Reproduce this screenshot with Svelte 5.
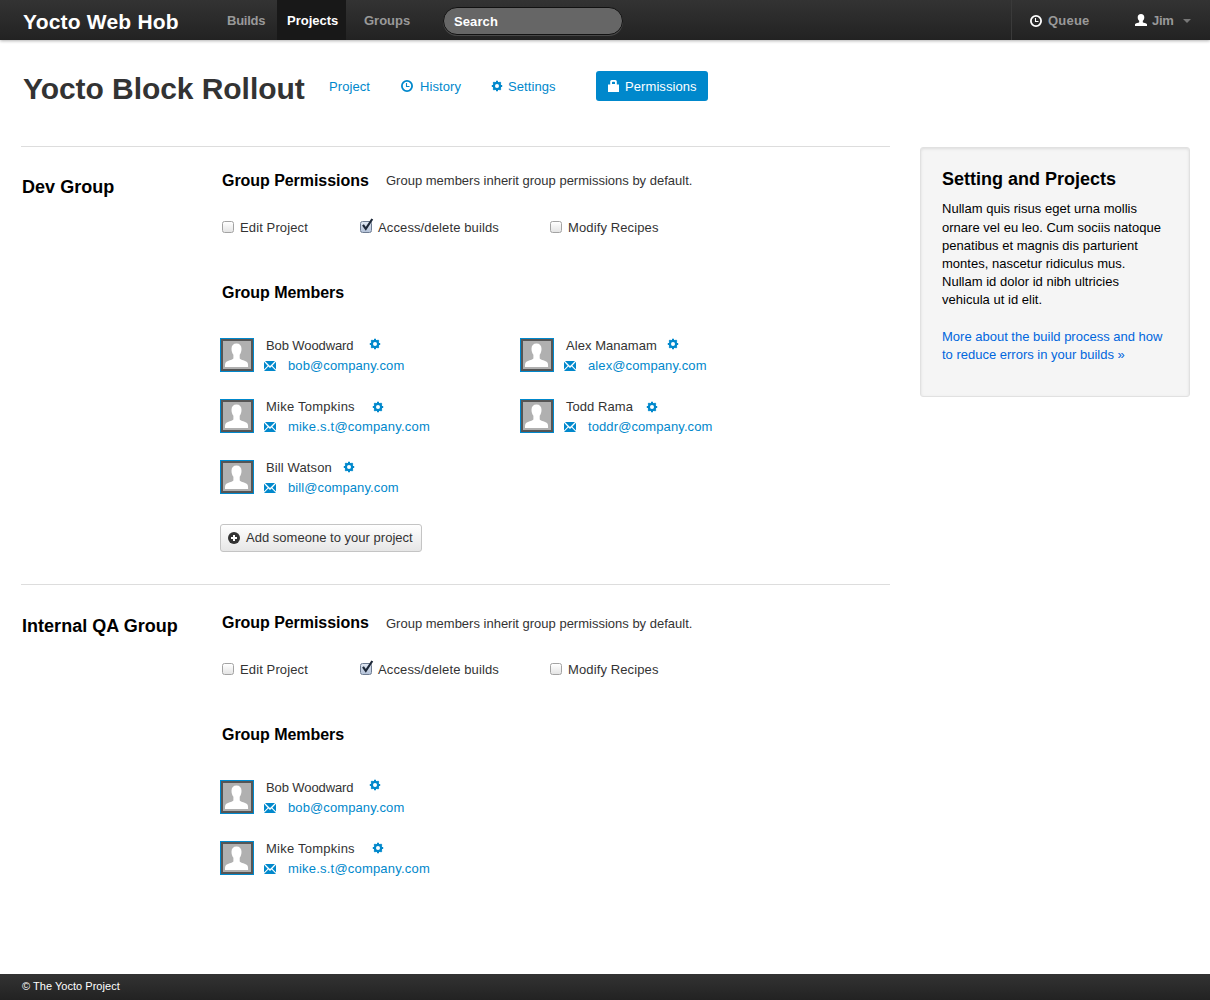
<script>
  const bob = { name: 'Bob Woodward', email: 'bob@company.com', gap: 16, lift: -1, track: -0.1 };
  const mike = { name: 'Mike Tompkins', email: 'mike.s.t@company.com', gap: 17, lift: 1, track: 0.24 };
  const groups = [
    {
      title: 'Dev Group',
      columns: 2,
      canAdd: true,
      members: [
        bob,
        { name: 'Alex Manamam', email: 'alex@company.com', gap: 10, lift: -1, track: 0.05 },
        mike,
        { name: 'Todd Rama', email: 'toddr@company.com', gap: 13, lift: 1, track: 0.05 },
        { name: 'Bill Watson', email: 'bill@company.com', gap: 11, lift: 0, track: 0.13 }
      ]
    },
    { title: 'Internal QA Group', columns: 1, canAdd: false, members: [bob, mike] }
  ];
  const permissions = [
    { label: 'Edit Project', on: false },
    { label: 'Access/delete builds', on: true },
    { label: 'Modify Recipes', on: false }
  ];
</script>

{#snippet clock()}
  <svg class="icon" width="12" height="12" viewBox="0 0 12 12">
    <circle cx="6" cy="6" r="5.1" fill="none" stroke="currentColor" stroke-width="1.8" />
    <path d="M5.500 3v3.500H8.500" fill="none" stroke="currentColor" stroke-width="1.1" />
  </svg>
{/snippet}

{#snippet gear()}
  <svg class="icon" width="12" height="12" viewBox="0 0 12 12">
    <g stroke="currentColor" stroke-width="2">
      <path d="M6 .8v10.400M.8 6h10.400M2.300 2.300l7.400 7.400M9.700 2.300l-7.400 7.400" />
    </g>
    <circle cx="6" cy="6" r="4.300" fill="currentColor" />
    <circle cx="6" cy="6" r="2" fill="#fff" />
  </svg>
{/snippet}

<div class="page">
  <header class="navbar">
    <div class="brand">Yocto Web Hob</div>
    <nav class="tabs">
      <span class="tab builds">Builds</span>
      <span class="tab active">Projects</span>
      <span class="tab groups">Groups</span>
    </nav>
    <div class="search">Search</div>
    <div class="account">
      <div class="queue"><b class="white">{@render clock()}</b>Queue</div>
      <div class="user">
        <svg class="icon" width="12" height="12" viewBox="0 0 12 12">
          <path fill="#fff" d="M6 0C8.200 0 9.300 1.300 9.300 3.200c0 1.700-.7 2.900-1.500 3.600v1.500c.5.700 3.800.7 4.200 1.900V12H0v-1.800c.4-1.200 3.700-1.200 4.200-1.900V6.800C3.400 6.100 2.700 4.900 2.700 3.200 2.700 1.300 3.800 0 6 0z" />
        </svg>
        <span>Jim</span>
        <i class="caret"></i>
      </div>
    </div>
  </header>

  <div class="titlebar">
    <h1>Yocto Block Rollout</h1>
    <nav class="subnav">
      <a class="project"><span>Project</span></a>
      <a class="history">{@render clock()}<span>History</span></a>
      <a class="settings">{@render gear()}<span>Settings</span></a>
      <a class="btn-primary">
        <svg class="icon" width="11" height="12" viewBox="0 0 11 12">
          <path fill="#fff" fill-rule="evenodd" d="M0 4.500h2.200V1.500Q2.200 0 3.700 0h3.600Q8.800 0 8.800 1.500v3H11V12H0zM4 4h3V2.500Q7 1.700 6.300 1.700H4.700Q4 1.700 4 2.500z" />
        </svg>
        <span>Permissions</span>
      </a>
    </nav>
  </div>

  <div class="columns">
    <main>
      {#each groups as group}
        <section>
          <h2>{group.title}</h2>
          <div class="body">
            <div class="perm-head">
              <h3>Group Permissions</h3>
              <span>Group members inherit group permissions by default.</span>
            </div>
            <div class="perms">
              {#each permissions as p}
                <div class="perm">
                  <span class="box" class:on={p.on}>
                    {#if p.on}
                      <svg width="14" height="15" viewBox="0 0 14 15">
                        <path d="M3 6.800L5.800 10.800 12.300 1" fill="none" stroke="#1d2838" stroke-width="2.200" />
                      </svg>
                    {/if}
                  </span>
                  <span>{p.label}</span>
                </div>
              {/each}
            </div>
            <h3 class="members-title">Group Members</h3>
            <div class="members" class:single={group.columns === 1}>
              {#each group.members as m}
                <div class="member">
                  <svg class="avatar" width="34" height="34" viewBox="0 0 34 34">
                    <rect width="34" height="34" fill="#0088cc" />
                    <rect x="1" y="1" width="32" height="32" fill="#555" />
                    <rect x="3" y="3" width="28" height="28" fill="#b0b0b0" />
                    <path fill="#fff" d="M16.500 5.500c3.200 0 5 2 5 5.200 0 2.700-.8 4.800-1.800 6v3.800c1 1.700 6.100 1.900 7.700 4 .6.900.7 2 .7 4.500H5c0-2.500.1-3.600.7-4.500 1.600-2.100 6.700-2.300 7.700-4v-3.800c-1-1.200-1.900-3.300-1.900-6 0-3.200 1.800-5.200 5-5.200z" />
                  </svg>
                  <div class="who">
                    <div class="name">
                      <span style="letter-spacing: {m.track}px">{m.name}</span>
                      <span class="gear" style="margin-left: {m.gap}px; margin-top: {m.lift * 2 - 2}px">{@render gear()}</span>
                    </div>
                    <div class="mail">
                      <svg class="icon" width="12" height="10" viewBox="0 0 12 10">
                        <path fill="#0088cc" d="M1 0h10L6 5zM0 .8L3.700 4.700 0 8.600zM12 .8v7.800L8.300 4.700zM4.400 5.400L6 6.900l1.600-1.500L12 9.900V10H0v-.1z" />
                      </svg>
                      <a class:wide={m === mike}>{m.email}</a>
                    </div>
                  </div>
                </div>
              {/each}
            </div>
            {#if group.canAdd}
              <div class="btn">
                <svg class="icon" width="12" height="12" viewBox="0 0 12 12">
                  <circle cx="6" cy="6" r="6" fill="#333" />
                  <path d="M6 3v6M3 6h6" stroke="#fff" stroke-width="2" />
                </svg>
                <span>Add someone to your project</span>
              </div>
            {/if}
          </div>
        </section>
      {/each}
    </main>
    <aside>
      <h2>Setting and Projects</h2>
      <p>Nullam quis risus eget urna mollis<br />ornare vel eu leo. Cum sociis natoque<br />penatibus et magnis dis parturient<br />montes, nascetur ridiculus mus.<br />Nullam id dolor id nibh ultricies<br />vehicula ut id elit.</p>
      <p class="more"><a>More about the build process and how<br />to reduce errors in your builds »</a></p>
    </aside>
  </div>

  <footer>© The Yocto Project</footer>
</div>

<style>
  :global(body) {
    margin: 0;
    background: #fff;
  }
  .page {
    width: 1210px;
    height: 1000px;
    display: flex;
    flex-direction: column;
    font: 13px/18px 'Liberation Sans', Arial, sans-serif;
    letter-spacing: 0.1px;
    color: #333;
    overflow: hidden;
    white-space: nowrap;
  }
  h1, h2, h3, p {
    margin: 0;
  }
  .icon {
    display: block;
    flex: none;
  }
  .navbar {
    height: 40px;
    flex: none;
    box-sizing: border-box;
    display: flex;
    background: linear-gradient(#333, #222);
    box-shadow: 0 1px 3px rgba(0, 0, 0, 0.3);
    color: #999;
    font-weight: bold;
    line-height: 41px;
  }
  .brand {
    width: 194px;
    padding-left: 23px;
    color: #fff;
    font-size: 21px;
    line-height: 43px;
    letter-spacing: 0.2px;
  }
  .tabs {
    display: flex;
    width: 226px;
  }
  .tab {
    padding: 0 10px;
    letter-spacing: 0;
  }
  .builds {
    width: 40px;
    letter-spacing: -0.250px;
  }
  .tab.active {
    width: 49px;
    background: #181818;
    color: #fff;
  }
  .groups {
    margin-left: 8px;
  }
  .search {
    box-sizing: border-box;
    width: 180px;
    height: 28px;
    margin-top: 7px;
    padding-left: 10px;
    border: 1px solid #111;
    border-radius: 14px;
    background: #666;
    box-shadow: 0 1px 0 #484848;
    color: #fff;
    line-height: 27px;
  }
  .account {
    display: flex;
    align-items: center;
    margin-left: auto;
    width: 198px;
    border-left: 1px solid #3a3a3a;
  }
  .white {
    color: #fff;
    padding-top: 1px;
  }
  .queue, .user {
    display: flex;
    align-items: center;
    gap: 6px;
  }
  .queue {
    margin-left: 18px;
    width: 105px;
    letter-spacing: 0.2px;
  }
  .user {
    gap: 5px;
    letter-spacing: -0.300px;
  }
  .caret {
    margin: 2px 0 0 4px;
    border: 4px solid transparent;
    border-top-color: #777;
    border-bottom: 0;
  }
  .titlebar {
    display: flex;
    height: 106px;
    flex: none;
    padding-left: 23px;
  }
  h1 {
    width: 306px;
    padding-top: 31px;
    font-size: 30px;
    line-height: 36px;
    letter-spacing: -0.060px;
  }
  .subnav {
    display: flex;
    align-items: center;
    height: 30px;
    margin-top: 31px;
    color: #0088cc;
    letter-spacing: 0.080px;
  }
  .subnav a {
    display: flex;
    align-items: center;
    height: 30px;
  }
  .subnav span {
    padding-top: 2px;
  }
  .project {
    width: 72px;
  }
  .history {
    gap: 7px;
    width: 90px;
  }
  .settings {
    gap: 5px;
    width: 105px;
  }
  .subnav .btn-primary {
    box-sizing: border-box;
    width: 112px;
    padding-left: 12px;
    gap: 6px;
    border-radius: 3px;
    background: #0088cc;
    color: #fff;
  }
  .columns {
    display: flex;
    flex: 1;
    min-height: 0;
    align-items: flex-start;
    padding-left: 21px;
  }
  main {
    width: 869px;
  }
  section {
    display: flex;
    box-sizing: border-box;
    height: 438px;
    border-top: 1px solid #ddd;
  }
  section + section {
    height: 390px;
  }
  h2 {
    color: #000;
    font-size: 18px;
    line-height: 24px;
    letter-spacing: 0.030px;
  }
  section h2 {
    width: 200px;
    padding: 28px 0 0 1px;
  }
  .body {
    padding-top: 22px;
  }
  section + section .body {
    padding-top: 26px;
  }
  section + section h2 {
    padding-top: 29px;
  }
  .perm-head {
    display: flex;
    align-items: center;
    height: 24px;
  }
  h3 {
    color: #000;
    font-size: 16px;
    line-height: 24px;
    letter-spacing: -0.050px;
  }
  .perm-head h3 {
    width: 164px;
  }
  .perm-head span {
    letter-spacing: 0;
  }
  section + section .perm-head span {
    padding-top: 1px;
  }
  .perms {
    display: grid;
    grid-template-columns: 138px 190px 150px;
    margin-top: 26px;
    height: 18px;
    letter-spacing: 0.120px;
  }
  .perm {
    display: flex;
    align-items: center;
    gap: 6px;
  }
  .box {
    box-sizing: border-box;
    width: 12px;
    height: 12px;
    margin-top: -2px;
    border: 1px solid #a3a3a3;
    border-radius: 2.500px;
    background: linear-gradient(#fff, #e4e4e4);
  }
  .box.on {
    border-color: #6d7b91;
    background: linear-gradient(#e0e7f2, #b4c2d8);
  }
  .box svg {
    display: block;
    margin: -4px 0 0 -1px;
  }
  .members-title {
    margin-top: 44px;
  }
  .members {
    display: grid;
    grid-template-columns: 300px 300px;
    grid-auto-rows: 61px;
    margin: 33px 0 0 -2px;
  }
  .members.single {
    grid-template-columns: 300px;
  }
  .member {
    display: flex;
    align-items: flex-start;
  }
  .avatar {
    display: block;
  }
  .who {
    margin-left: 10px;
  }
  .name {
    display: flex;
    align-items: center;
    height: 18px;
    margin: -1px 0 0 2px;
  }
  .mail {
    display: flex;
    align-items: center;
    gap: 12px;
    height: 18px;
    margin-top: 2px;
  }
  .mail .wide {
    letter-spacing: 0.200px;
  }
  .gear, .mail {
    color: #0088cc;
  }
  .single .gear {
    margin-bottom: 2px;
  }
  .btn {
    display: flex;
    align-items: center;
    box-sizing: border-box;
    gap: 6px;
    width: 202px;
    height: 28px;
    margin: 3px 0 0 -2px;
    padding-left: 7px;
    border: 1px solid #c4c4c4;
    border-radius: 3px;
    background: linear-gradient(#fff, #e6e6e6);
    letter-spacing: 0.020px;
  }
  aside {
    box-sizing: border-box;
    width: 270px;
    height: 250px;
    margin: 1px 0 0 30px;
    padding: 19px 21px;
    border: 1px solid #e1e1e1;
    border-radius: 3px;
    background: #f5f5f5;
    box-shadow: inset 0 1px 3px rgba(0, 0, 0, 0.1);
    color: #000;
    line-height: 18.200px;
    letter-spacing: 0.020px;
  }
  aside h2 {
    letter-spacing: 0;
  }
  aside p {
    margin-top: 9.400px;
  }
  aside .more {
    margin-top: 18.600px;
    color: #0066dd;
    letter-spacing: 0;
  }
  footer {
    height: 26px;
    flex: none;
    padding-left: 22px;
    background: linear-gradient(#333, #222);
    color: #fff;
    font-size: 11px;
    line-height: 25px;
    letter-spacing: 0.030px;
  }
</style>
